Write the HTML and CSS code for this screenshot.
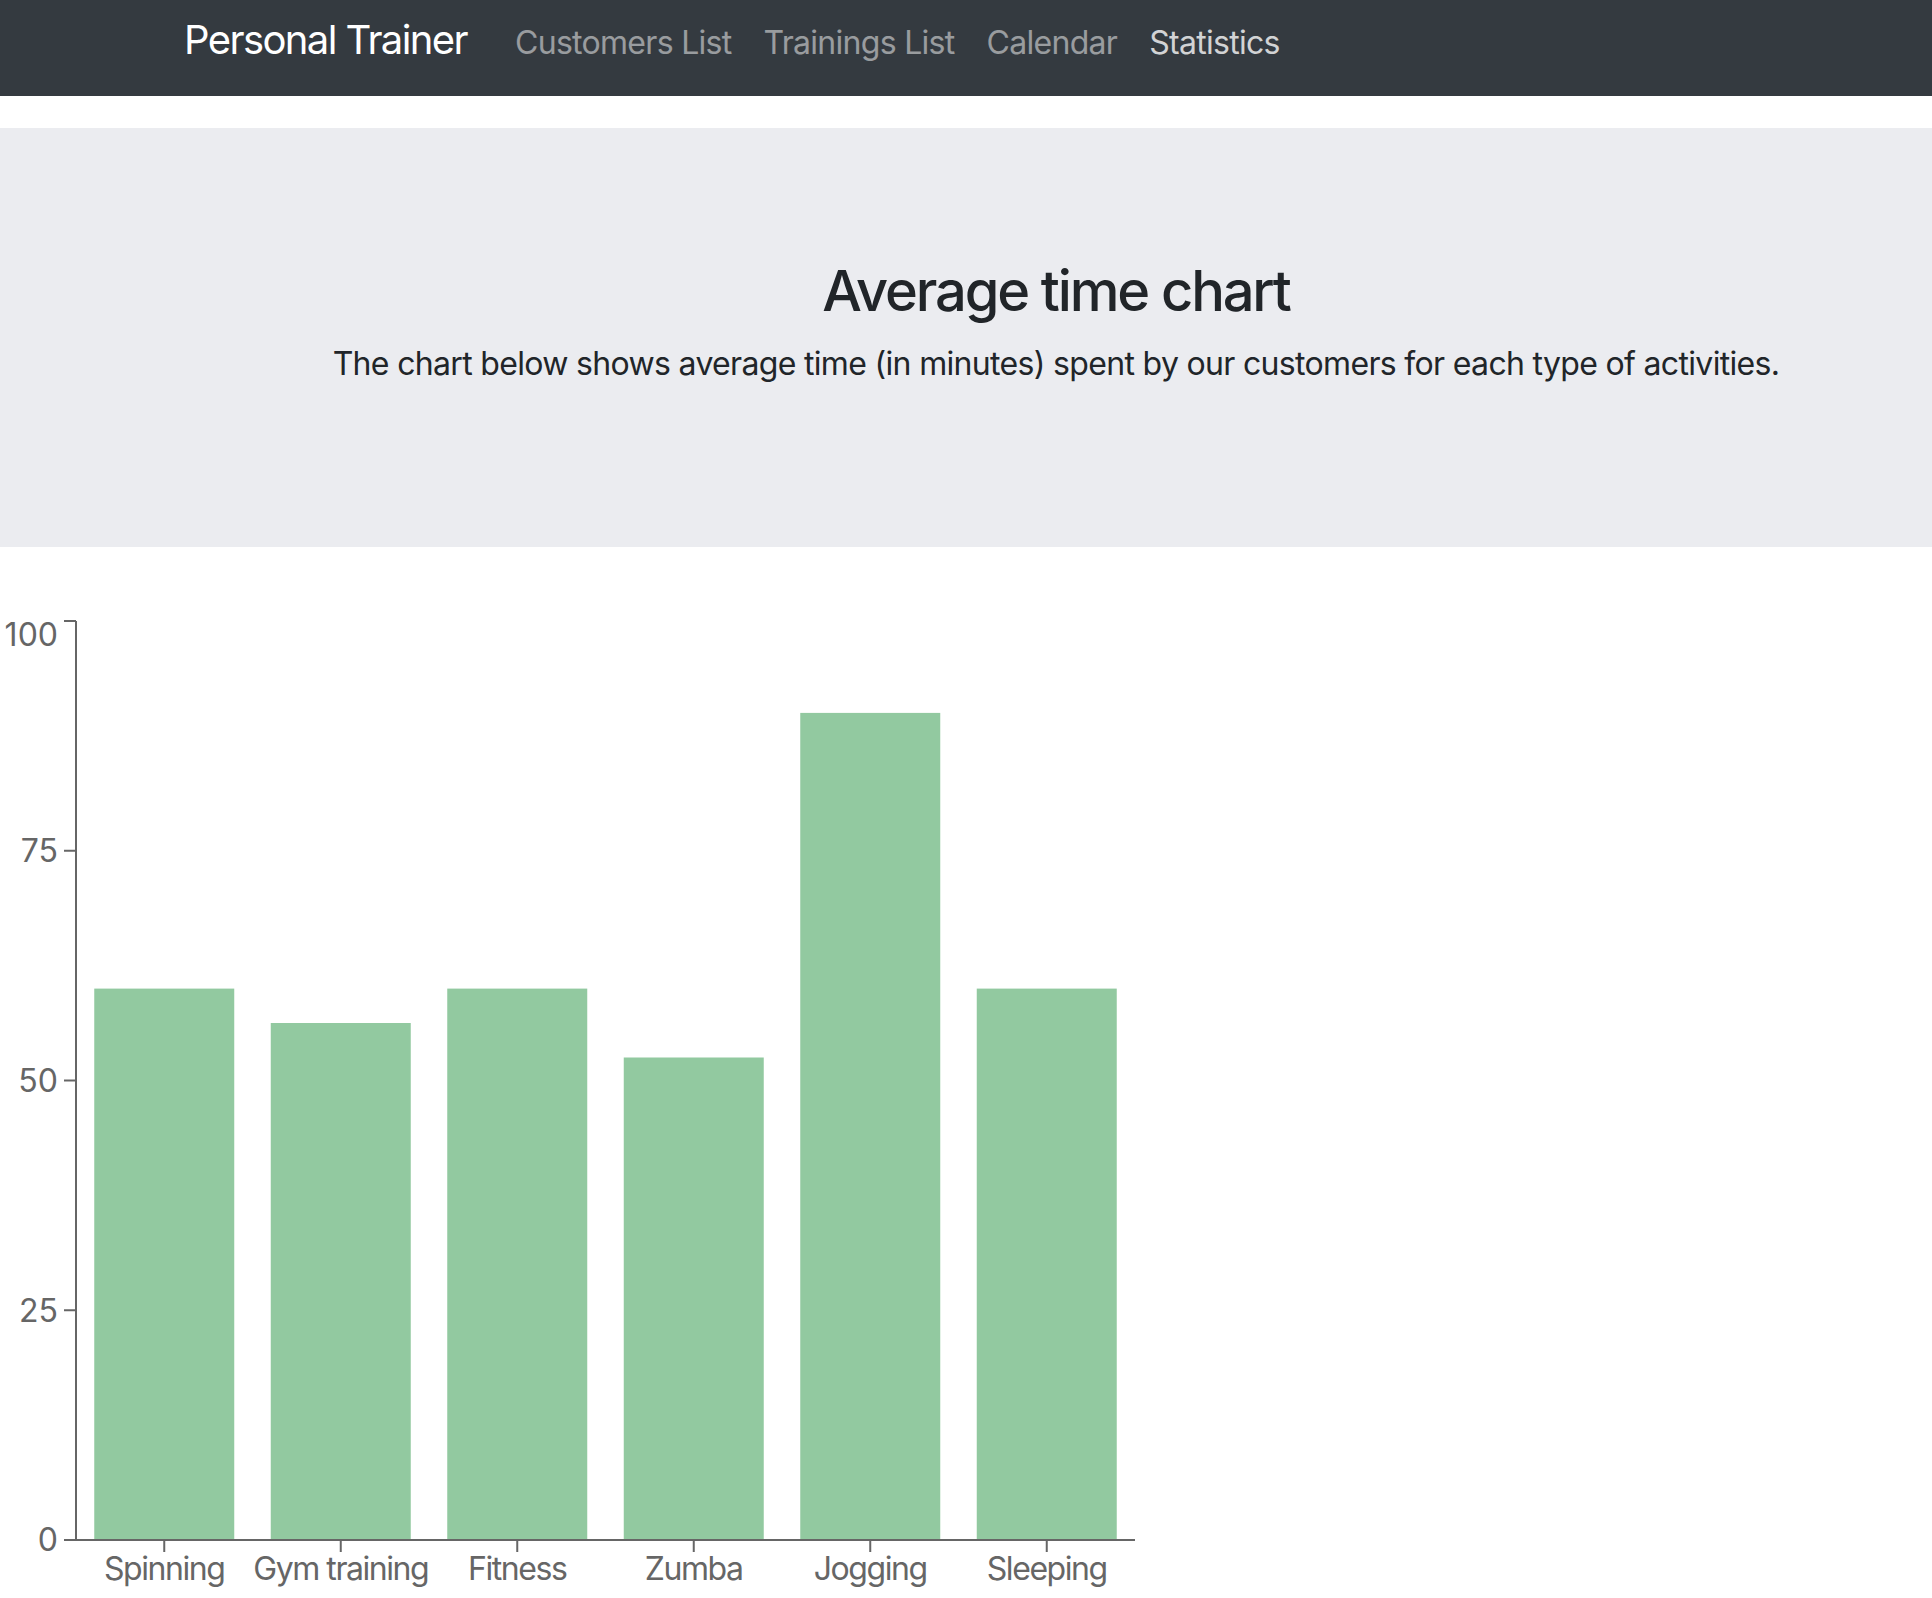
FILE: index.html
```html
<!DOCTYPE html>
<html lang="en">
<head>
<meta charset="utf-8">
<title>Personal Trainer</title>
<link rel="stylesheet" href="styles.css">
</head>
<body>
<nav class="navbar">
  <a class="brand" href="#">Personal Trainer</a>
  <ul class="nav-links">
    <li><a class="nav-link" href="#">Customers List</a></li>
    <li><a class="nav-link" href="#">Trainings List</a></li>
    <li><a class="nav-link" href="#">Calendar</a></li>
    <li><a class="nav-link active" href="#">Statistics</a></li>
  </ul>
</nav>
<section class="jumbotron">
  <h3 class="title">Average time chart</h3>
  <p class="lead">The chart below shows average time (in minutes) spent by our customers for each type of activities.</p>
</section>
<div class="chart">
  <svg class="chart-svg" width="1200" height="988" viewBox="0 0 1200 988">
    <g class="bars">
      <rect x="94.25" y="377.6" width="140" height="551.4"/>
      <rect x="270.75" y="412" width="140" height="517"/>
      <rect x="447.25" y="377.6" width="140" height="551.4"/>
      <rect x="623.75" y="446.5" width="140" height="482.5"/>
      <rect x="800.25" y="101.9" width="140" height="827.1"/>
      <rect x="976.75" y="377.6" width="140" height="551.4"/>
    </g>
    <g class="axis">
      <line x1="76" y1="10" x2="76" y2="929"/>
      <line x1="76" y1="929" x2="1135" y2="929"/>
      <line x1="64" y1="10" x2="76" y2="10"/>
      <line x1="64" y1="239.75" x2="76" y2="239.75"/>
      <line x1="64" y1="469.5" x2="76" y2="469.5"/>
      <line x1="64" y1="699.25" x2="76" y2="699.25"/>
      <line x1="64" y1="929" x2="76" y2="929"/>
      <line x1="164.25" y1="929" x2="164.25" y2="941"/>
      <line x1="340.75" y1="929" x2="340.75" y2="941"/>
      <line x1="517.25" y1="929" x2="517.25" y2="941"/>
      <line x1="693.75" y1="929" x2="693.75" y2="941"/>
      <line x1="870.25" y1="929" x2="870.25" y2="941"/>
      <line x1="1046.75" y1="929" x2="1046.75" y2="941"/>
    </g>
    <g class="ylabels">
      <text x="58" y="35">100</text>
      <text x="58" y="251">75</text>
      <text x="58" y="481">50</text>
      <text x="58" y="711">25</text>
      <text x="58" y="940">0</text>
    </g>
    <g class="xlabels">
      <text x="164.25" y="969">Spinning</text>
      <text x="340.75" y="969">Gym training</text>
      <text x="517.25" y="969">Fitness</text>
      <text x="693.75" y="969">Zumba</text>
      <text x="870.25" y="969">Jogging</text>
      <text x="1046.75" y="969">Sleeping</text>
    </g>
  </svg>
</div>
</body>
</html>
```
FILE: styles.css
```css
html, body {
  margin: 0;
  padding: 0;
}
body {
  font-family: Inter, "Noto Sans", "Liberation Sans", sans-serif;
  color: #212529;
  background: #fff;
  overflow: hidden;
}
.navbar {
  box-sizing: border-box;
  height: 96px;
  background: #343a40;
  display: flex;
  align-items: baseline;
  padding: 16px 0 0 184px;
}
.brand {
  font-size: 40px;
  line-height: 48px;
  letter-spacing: -0.04em;
  color: #fff;
  text-decoration: none;
  margin-right: 32px;
}
.nav-links {
  list-style: none;
  margin: 0;
  padding: 0;
  display: flex;
  align-items: baseline;
}
.nav-link {
  display: block;
  font-size: 32px;
  line-height: 48px;
  letter-spacing: -0.022em;
  padding: 0 16px;
  color: rgba(255, 255, 255, 0.5);
  text-decoration: none;
}
.nav-link.active {
  color: rgba(255, 255, 255, 0.78);
}
.jumbotron {
  margin-top: 32px;
  background: #ebecf0;
  padding: 130px 64px 127px 244px;
  text-align: center;
}
.title {
  margin: 0 0 15px;
  font-size: 56px;
  font-weight: 500;
  line-height: 1.2;
  letter-spacing: -0.038em;
}
.lead {
  margin: 0 0 32px;
  font-size: 32px;
  line-height: 48px;
  letter-spacing: -0.021em;
}
.chart {
  margin-top: 64px;
  height: 988px;
}
.chart-svg {
  display: block;
}
.bars rect {
  fill: #92c9a0;
}
.axis line {
  stroke: #666;
  stroke-width: 2;
}
.ylabels text,
.xlabels text {
  font-family: Inter, "Noto Sans", "Liberation Sans", sans-serif;
  font-size: 32px;
  fill: #666;
}
.ylabels text {
  text-anchor: end;
}
.xlabels text {
  text-anchor: middle;
  letter-spacing: -0.045em;
}
```
